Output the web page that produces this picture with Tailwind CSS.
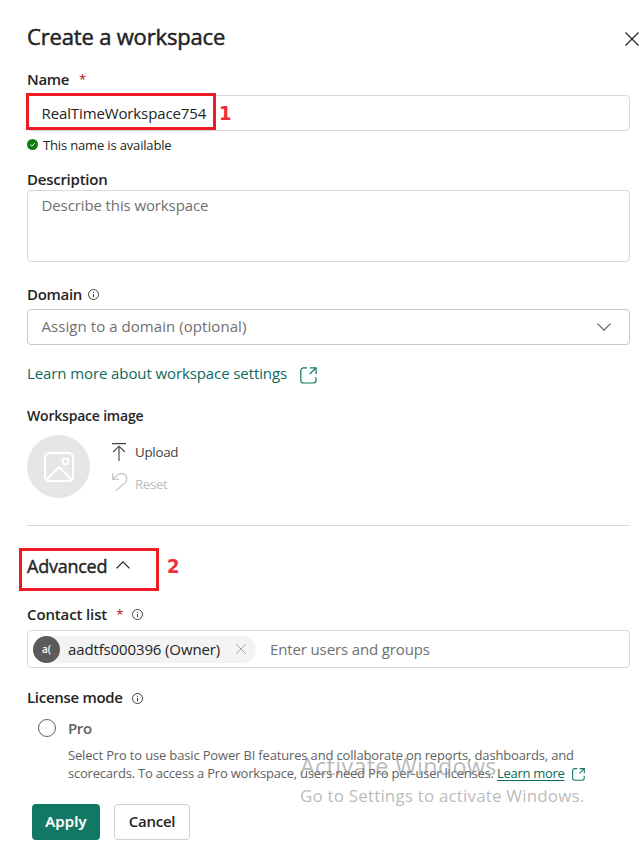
<!DOCTYPE html>
<html lang="en">
<head>
<meta charset="utf-8">
<title>Create a workspace</title>
<script src="https://cdn.jsdelivr.net/npm/@tailwindcss/browser@4"></script>
</head>
<body class="bg-white">
<main class="relative flex h-[846px] w-[640px] flex-col overflow-hidden pl-[27px] pr-[10px] pt-[23px] font-['Open_Sans',sans-serif] text-[15px] leading-5 whitespace-nowrap text-[#242424]">
  <header class="-mr-[10px] flex h-7 items-center justify-between pr-px">
    <h1 class="-mt-[2px] text-[22px] leading-7 tracking-[-0.17px] [-webkit-text-stroke:0.5px]"><span>Create a workspace</span></h1>
    <svg class="mt-1 h-[14px] w-[14px]" viewBox="0 0 14 14" fill="none" stroke="#242424" stroke-width="1.2"><path d="M.5 .5l13 13M13.5 .5l-13 13"/></svg>
  </header>

  <label class="mt-[18px] flex h-5"><span class="font-semibold tracking-[-0.35px]">Name</span><span class="ml-[10px] text-[13px] text-[#b10e1c]">*</span></label>
  <div class="mt-[6px] flex h-9 items-center rounded border border-[#d9d9d9] pl-[13.5px]"><span class="tracking-[-0.12px]">RealTimeWorkspace754</span></div>
  <div class="mt-1 flex h-5 items-center gap-[5px] text-[13px]">
    <svg class="-mt-px h-[11px] w-[11px]" viewBox="0 0 11 11"><circle cx="5.5" cy="5.5" r="5.5" fill="#107c10"/><path d="M3.4 5.7l1.5 1.4L7.8 4.2" fill="none" stroke="#fff"/></svg>
    <span class="tracking-[-0.16px]">This name is available</span>
  </div>

  <label class="mt-[14px] h-5"><span class="font-semibold tracking-[-0.25px]">Description</span></label>
  <div class="mt-px h-[72px] rounded border border-[#d9d9d9] pt-1 pl-[13.5px] text-[#707070]"><span class="tracking-[-0.11px]">Describe this workspace</span></div>

  <label class="mt-[22px] flex h-5 items-center gap-[6px]"><span class="font-semibold tracking-[-0.3px]">Domain</span>
    <svg class="h-[11px] w-[11px]" viewBox="0 0 11 11" fill="none" stroke="#424242"><circle cx="5.5" cy="5.5" r="5"/><path d="M5.5 5v3.2M5.5 2.8v1.1"/></svg>
  </label>
  <div class="mt-[5px] flex h-9 items-center justify-between rounded border border-[#c8c8c8] pr-[18px] pl-[13.5px] text-[#707070]"><span class="-mt-[2px] tracking-[0.06px]">Assign to a domain (optional)</span>
    <svg class="h-2 w-[14px]" viewBox="0 0 14 8" fill="none" stroke="#616161" stroke-width="1.2"><path d="M.5 .7L7 7.2 13.5 .7"/></svg>
  </div>

  <a class="mt-[19px] flex h-5 items-center gap-[13px] text-[#0e6a5b]"><span class="-mt-[2px] tracking-[-0.1px]">Learn more about workspace settings</span>
    <svg class="mt-[3px] h-[17px] w-[17px]" viewBox="0 0 17 17" fill="none" stroke="#117865" stroke-width="1.2"><path d="M7 .8H3.6A2.8 2.8 0 0 0 .8 3.6v9.6A2.8 2.8 0 0 0 3.6 16h9.6a2.8 2.8 0 0 0 2.8-2.8V10M10 .8h6.1V7M16 .9L9.8 7"/></svg>
  </a>

  <div class="mt-[22px] h-5 text-[14px]"><span class="font-semibold tracking-[-0.2px]">Workspace image</span></div>
  <div class="mt-[9px] flex h-[63px] gap-[22px]">
    <div class="flex size-[63px] items-center justify-center rounded-full bg-[#e6e6e6]">
      <svg class="mt-px ml-px h-[30px] w-[30px]" viewBox="0 0 30 30" fill="none" stroke="#fff" stroke-width="2"><rect x="1" y="1" width="28" height="28" rx="4.5"/><circle cx="21.5" cy="9.5" r="3"/><path d="M2.5 27.5L13.2 16.7q1.8-1.8 3.6 0L27.5 27.5"/></svg>
    </div>
    <div class="text-[13.4px]">
      <div class="mt-[7px] flex h-5 items-center gap-[9px] text-[#424242]">
        <svg class="-mt-px h-[18px] w-[14px]" viewBox="0 0 14 18" fill="none" stroke="#424242" stroke-width="1.1"><path d="M0 .6h14M7 18V3.3M1.2 9L7 3.2 12.8 9"/></svg>
        <span class="tracking-[-0.3px]">Upload</span>
      </div>
      <div class="mt-3 flex h-5 items-center gap-[7px] text-[#bdbdbd]">
        <svg class="-mt-1 h-[18px] w-4" viewBox="0 0 16 18" fill="none" stroke="#bdbdbd" stroke-width="1.1"><path d="M.7 0v6.3H7M.9 6.1L5.6 1.9c2.3-2 5.7-2 7.8.2s2 5.5-.2 7.6L4 17.7"/></svg>
        <span class="tracking-[-0.4px]">Reset</span>
      </div>
    </div>
  </div>

  <hr class="mt-[27px] h-px shrink-0 border-0 bg-[#d9d9d9]">

  <div class="mt-7 flex h-6 items-center gap-[9px] text-[18px] leading-6"><span class="tracking-[-0.25px] [-webkit-text-stroke:0.4px]">Advanced</span>
    <svg class="-mt-[3px] h-2 w-[14px]" viewBox="0 0 14 8" fill="none" stroke="#242424" stroke-width="1.3"><path d="M.5 7.4L7 .9l6.5 6.5"/></svg>
  </div>

  <label class="mt-[26px] flex h-5 items-center"><span class="font-semibold tracking-[-0.13px]">Contact list</span><span class="ml-[9px] text-[13px] text-[#b10e1c]">*</span>
    <svg class="ml-[9px] h-[11px] w-[11px]" viewBox="0 0 11 11" fill="none" stroke="#424242"><circle cx="5.5" cy="5.5" r="5"/><path d="M5.5 5v3.2M5.5 2.8v1.1"/></svg>
  </label>
  <div class="mt-[6px] flex h-[38px] items-center rounded border border-[#d9d9d9] pl-[5px]">
    <div class="flex h-[27px] w-[223px] items-center rounded-full bg-[#f3f3f3]">
      <div class="flex size-[27px] items-center justify-center rounded-full bg-[#5d5b59] text-[10px] font-semibold text-white"><span>a(</span></div>
      <span class="ml-2 w-[153px] tracking-[-0.13px]">aadtfs000396 (Owner)</span>
      <svg class="ml-[15px] h-[10px] w-[10px]" viewBox="0 0 10 10" fill="none" stroke="#ababab"><path d="M0 0l10 10M10 0L0 10"/></svg>
    </div>
    <span class="ml-[14px] tracking-[-0.13px] text-[#707070]">Enter users and groups</span>
  </div>

  <label class="mt-[19px] flex h-5 items-center gap-[9px]"><span class="font-semibold tracking-[-0.3px]">License mode</span>
    <svg class="mt-[2px] h-[11px] w-[11px]" viewBox="0 0 11 11" fill="none" stroke="#424242"><circle cx="5.5" cy="5.5" r="5"/><path d="M5.5 5v3.2M5.5 2.8v1.1"/></svg>
  </label>
  <label class="mt-[11px] flex h-5 items-center gap-3 pl-[11px] text-[#616161]">
    <i class="size-[18px] rounded-full border border-[#616161]"></i><span class="font-semibold tracking-[-0.35px]">Pro</span>
  </label>
  <p class="mt-2 h-9 pl-[41px] text-[13px] leading-[18px] text-[#616161]">
    <span class="block tracking-[-0.16px]">Select Pro to use basic Power BI features and collaborate on reports, dashboards, and</span>
    <span class="flex items-center"><span class="tracking-[-0.21px]">scorecards. To access a Pro workspace, users need Pro per-user licenses.&nbsp;</span><a class="tracking-[-0.28px] text-[#0e6a5b] underline underline-offset-2">Learn more</a>
      <svg class="mt-[2px] ml-[7px] h-[13px] w-[13px]" viewBox="0 0 17 17" fill="none" stroke="#117865" stroke-width="1.4"><path d="M7 .8H3.6A2.8 2.8 0 0 0 .8 3.6v9.6A2.8 2.8 0 0 0 3.6 16h9.6a2.8 2.8 0 0 0 2.8-2.8V10M10 .8h6.1V7M16 .9L9.8 7"/></svg>
    </span>
  </p>

  <footer class="mt-[22px] flex gap-[14px] pl-[5px] text-[15px]">
    <button class="h-9 w-[68px] rounded bg-[#117865] pb-[2px] font-semibold text-white"><span class="[-webkit-text-stroke:0.2px] tracking-[0.1px]">Apply</span></button>
    <button class="h-9 w-[76px] rounded border border-[#d1d1d1] pb-[2px]"><span class="font-semibold tracking-[-0.25px]">Cancel</span></button>
  </footer>

  <div class="absolute top-[93px] left-[26px] h-[37px] w-[190px] border-[3px] border-[#ed1c24]"></div>
  <b class="absolute top-[102px] left-[219px] font-['DejaVu_Sans_Condensed','DejaVu_Sans',sans-serif] text-[20px] leading-[22px] text-[#ee2f37]">1</b>
  <div class="absolute top-[548px] left-[19px] h-[43px] w-[140px] border-[3px] border-[#ed1c24]"></div>
  <b class="absolute top-[555px] left-[167px] font-['DejaVu_Sans_Condensed','DejaVu_Sans',sans-serif] text-[20px] leading-[22px] text-[#ee2f37]">2</b>
  <div class="absolute top-[752px] left-[300px] text-[#8c8c8c]/60">
    <div class="text-[23.4px] leading-7 tracking-[0.3px]"><span>Activate Windows</span></div>
    <div class="mt-[6px] text-[17px] leading-5 tracking-[0.17px]"><span>Go to Settings to activate Windows.</span></div>
  </div>
</main>
</body>
</html>
